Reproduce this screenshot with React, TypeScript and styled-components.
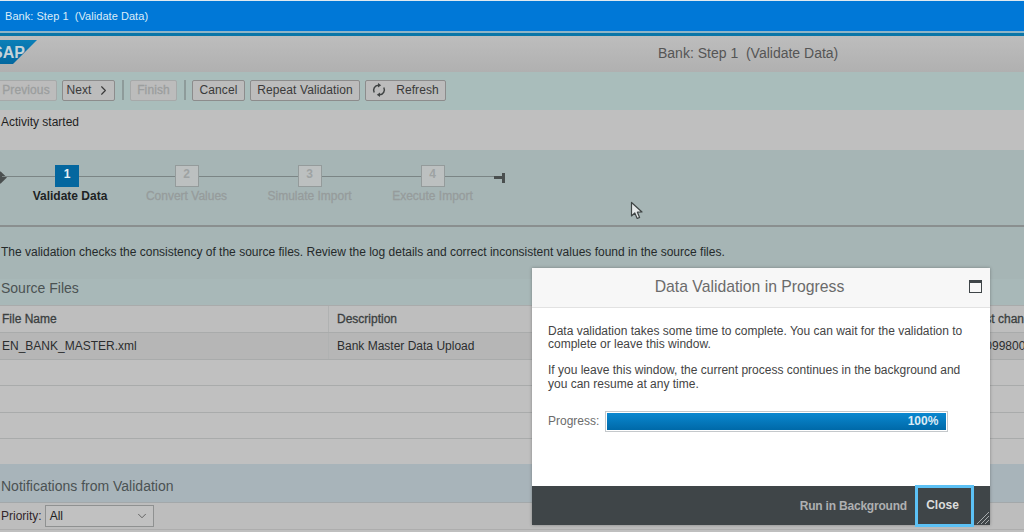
import React from "react";
import styled, { createGlobalStyle } from "styled-components";
import { ChevronDown, ChevronRight } from "lucide-react";

const GlobalStyle = createGlobalStyle`
  html, body {
    margin: 0;
    padding: 0;
    background: #bfbfbf;
  }
  * {
    box-sizing: border-box;
  }
`;

const Page = styled.div`
  position: relative;
  width: 1024px;
  height: 532px;
  overflow: hidden;
  font-family: "Liberation Sans", Arial, sans-serif;
  font-size: 12px;
  color: #2c2c2c;
  display: flex;
  flex-direction: column;
`;

const TitleBar = styled.div`
  height: 33px;
  flex: none;
  background: #0078d7;
  border-top: 1px solid #dfe9f0;
  border-bottom: 2px solid #8fb4c6;
  color: #dcecf8;
  font-size: 11px;
  letter-spacing: 0.05px;
  display: flex;
  align-items: center;
  padding: 0 5px 1px;
  white-space: pre;
`;

const AccentLine = styled.div`
  height: 3px;
  flex: none;
  background: #0a76a8;
`;

const Header = styled.div`
  height: 36px;
  flex: none;
  background: linear-gradient(#bdbdbd, #b0b0b0);
  display: flex;
  align-items: flex-start;
  padding-top: 4px;
`;

const HeaderTitle = styled.div`
  font-size: 14px;
  color: #555;
  white-space: pre;
  margin: 5px 0 0 621px;
`;

const Toolbar = styled.div`
  height: 38px;
  flex: none;
  background: #a9bdbb;
  display: flex;
  align-items: center;
  gap: 5px;
  padding: 0 0 2px 0;
  margin-left: -5px;
`;

const ToolButton = styled.div<{ $disabled?: boolean; $width: number }>`
  width: ${(p) => p.$width}px;
  height: 21px;
  background: #bcbcbc;
  border: 1px solid ${(p) => (p.$disabled ? "#a6a9a9" : "#8c8c8c")};
  border-radius: 2px;
  color: ${(p) => (p.$disabled ? "#9b9e9e" : "#3a3a3a")};
  ${(p) => p.$disabled && "-webkit-text-stroke: 0.3px #9b9e9e;"}
  display: flex;
  align-items: center;
  justify-content: center;
  gap: 4px;
  letter-spacing: 0.1px;
`;

const RefreshLabel = styled.span`
  margin-left: 6px;
`;

const ToolSeparator = styled.div`
  width: 2px;
  height: 20px;
  background: #8e9b9a;
  margin: 0 1px 0 2px;
`;

const ActivityBar = styled.div`
  height: 40px;
  flex: none;
  background: #bfbfbf;
  padding: 5px 1px;
  color: #1f1f1f;
`;

const Roadmap = styled.div`
  height: 77px;
  flex: none;
  position: relative;
  background: #a6b5b5;
  border-bottom: 2px solid #8a8f8f;
  display: flex;
  padding: 15px 0 0 2px;
`;

const RoadStart = styled.div`
  width: 9px;
  height: 9px;
  background: #4a4f4f;
  transform: rotate(45deg);
  position: absolute;
  left: -4px;
  top: 23px;
`;

const RoadEnd = styled.div`
  position: absolute;
  left: 494px;
  top: 23px;
  width: 11px;
  height: 10px;
  border-right: 3px solid #4a4f4f;
  &::before {
    content: "";
    position: absolute;
    left: 0;
    top: 3px;
    width: 8px;
    height: 3px;
    background: #4a4f4f;
  }
`;

const Step = styled.div`
  position: relative;
  width: 123px;
  display: flex;
  flex-direction: column;
  align-items: center;
  &::before {
    content: "";
    position: absolute;
    left: 0;
    right: 0;
    top: 11px;
    height: 1px;
    background: #7b8585;
  }
`;

const StepBox = styled.div<{ $active?: boolean }>`
  position: relative;
  width: 24px;
  height: 22px;
  margin-left: ${(p) => (p.$active ? "7px" : "0")};
  background: ${(p) => (p.$active ? "#04679f" : "#bcc0c0")};
  border: 1px solid ${(p) => (p.$active ? "#04679f" : "#949b9b")};
  color: ${(p) => (p.$active ? "#e8f1f6" : "#9ea3a3")};
  font-weight: bold;
  text-align: center;
  line-height: 17px;
`;

const StepLabel = styled.div<{ $active?: boolean }>`
  margin-top: 2px;
  margin-left: ${(p) => (p.$active ? "13px" : "0")};
  font-weight: ${(p) => (p.$active ? "bold" : "normal")};
  white-space: nowrap;
  color: ${(p) => (p.$active ? "#1d2324" : "#969c9c")};
  ${(p) => !p.$active && "-webkit-text-stroke: 0.3px #969c9c;"}
`;

const Description = styled.div`
  height: 52px;
  flex: none;
  background: #a6b5b5;
  padding-top: 18px;
  padding-left: 1px;
  color: #252a2b;
  white-space: nowrap;
`;

const SectionTitle = styled.div<{ $bg: string; $height: number; $bottom: number }>`
  height: ${(p) => p.$height}px;
  flex: none;
  background: ${(p) => p.$bg};
  font-size: 14px;
  color: #4b5253;
  padding: 0 1px ${(p) => p.$bottom}px;
  display: flex;
  align-items: flex-end;
`;

const TableRow = styled.div<{ $bg: string; $height: number }>`
  height: ${(p) => p.$height}px;
  flex: none;
  background: ${(p) => p.$bg};
  border-top: 1px solid #a9abab;
  display: grid;
  grid-template-columns: 328px 644px 1fr;
  align-items: center;
`;

const Cell = styled.div<{ $bold?: boolean }>`
  height: 100%;
  padding: 0 0 1px 2px;
  display: flex;
  align-items: center;
  white-space: nowrap;
  overflow: hidden;
  color: ${(p) => (p.$bold ? "#3b3f40" : "#2b2d2e")};
  ${(p) => p.$bold && "-webkit-text-stroke: 0.3px #3b3f40;"}
  &:nth-child(2) {
    padding-left: 8px;
    border-left: 1px solid #b0b2b2;
  }
  &:nth-child(3) {
    padding-left: 0;
  }
`;

const FilterRow = styled.div`
  height: 28px;
  flex: none;
  background: #bdbdbd;
  border-top: 1px solid #a3a8aa;
  border-bottom: 1px solid #adadad;
  display: flex;
  align-items: center;
  gap: 3px;
  padding: 0 1px 1px;
  color: #32262a;
`;

const Select = styled.div`
  width: 109px;
  height: 22px;
  border: 1px solid #8f9191;
  background: #c1c1c1;
  display: flex;
  align-items: center;
  justify-content: space-between;
  padding: 0 4px;
  color: #202020;
`;

const Dialog = styled.div`
  position: absolute;
  left: 532px;
  top: 268px;
  width: 458px;
  height: 257px;
  background: #fff;
  box-shadow: 0 0 3px rgba(60, 60, 60, 0.45);
  display: flex;
  flex-direction: column;
`;

const DialogHeader = styled.div`
  position: relative;
  height: 40px;
  flex: none;
  background: #f7f7f7;
  border-bottom: 1px solid #e2e2e2;
  display: flex;
  align-items: center;
  justify-content: center;
  padding: 0 23px 2px 0;
  font-size: 15.75px;
  color: #6b6b6b;
`;

const MaximizeIcon = styled.div`
  position: absolute;
  right: 8px;
  top: 12px;
  width: 13px;
  height: 13px;
  border: 1px solid #3f4548;
  border-top-width: 3px;
`;

const DialogBody = styled.div`
  flex: 1;
  padding: 17px 16px 0;
  color: #444;
  line-height: 13px;
`;

const Paragraph = styled.p`
  margin: 0 0 12px;
  & + & {
    line-height: 14px;
  }
`;

const ProgressRow = styled.div`
  display: flex;
  align-items: center;
  gap: 6px;
  margin-top: 20px;
  color: #6b6b6b;
`;

const ProgressTrack = styled.div`
  width: 343px;
  height: 21px;
  border: 1px solid #c4c8cb;
  padding: 1px;
`;

const ProgressFill = styled.div`
  height: 100%;
  background: linear-gradient(#0a88d0, #0069a8);
  color: #dcecf6;
  font-weight: bold;
  display: flex;
  align-items: center;
  justify-content: flex-end;
  padding-right: 8px;
`;

const DialogFooter = styled.div`
  position: relative;
  height: 39px;
  flex: none;
  background: #3f4548;
  display: flex;
  align-items: center;
  justify-content: flex-end;
  padding-right: 16px;
  gap: 8px;
`;

const FooterLink = styled.div`
  color: #aeb0b1;
  font-weight: bold;
  white-space: nowrap;
  letter-spacing: -0.2px;
`;

const CloseButton = styled.div`
  width: 59px;
  height: 42px;
  border: 3px solid #5cc1f5;
  color: #dcdddd;
  font-weight: bold;
  display: flex;
  align-items: center;
  justify-content: center;
  padding: 0 4px 2px 0;
`;

const Grip = styled.svg`
  position: absolute;
  right: 1px;
  bottom: 1px;
`;

const LogoSvg = styled.svg`
  flex: none;
  display: block;
`;

const CursorSvg = styled.svg`
  position: absolute;
  left: 630px;
  top: 201px;
`;

const steps = [
  { label: "Convert Values", n: 2 },
  { label: "Simulate Import", n: 3 },
  { label: "Execute Import", n: 4 },
];

function App() {
  return (
    <Page>
      <GlobalStyle />
      <TitleBar>Bank: Step 1  (Validate Data)</TitleBar>
      <AccentLine />
      <Header>
        <LogoSvg width="37" height="24" viewBox="0 0 37 24">
          <defs>
            <linearGradient id="logoBlue" x1="0" y1="0" x2="0" y2="1">
              <stop offset="0" stopColor="#0b7fb8" />
              <stop offset="1" stopColor="#04689f" />
            </linearGradient>
          </defs>
          <polygon points="0,0 37,0 13,24 0,24" fill="url(#logoBlue)" />
          <text
            x="-8"
            y="18"
            fontFamily="Liberation Sans"
            fontWeight="bold"
            fontSize="16"
            fill="#c6d3d9"
          >
            SAP
          </text>
        </LogoSvg>
        <HeaderTitle>Bank: Step 1  (Validate Data)</HeaderTitle>
      </Header>
      <Toolbar>
        <ToolButton $disabled $width={62}>Previous</ToolButton>
        <ToolButton $width={53}>
          Next <ChevronRight size={15} strokeWidth={1.8} />
        </ToolButton>
        <ToolSeparator />
        <ToolButton $disabled $width={47}>Finish</ToolButton>
        <ToolSeparator />
        <ToolButton $width={53}>Cancel</ToolButton>
        <ToolButton $width={110}>Repeat Validation</ToolButton>
        <ToolButton $width={81}>
          <svg width="14" height="14" viewBox="0 0 14 14" fill="none">
            <path d="M2.2 9.5 A5 5 0 0 1 6.5 2.2" stroke="#3f4343" strokeWidth="1.5" />
            <path d="M6 0 L9.2 2.3 L6 4.6 Z" fill="#3f4343" />
            <path d="M11.8 4.5 A5 5 0 0 1 7.5 11.8" stroke="#3f4343" strokeWidth="1.5" />
            <path d="M8 9.4 L4.8 11.7 L8 14 Z" fill="#3f4343" />
          </svg>
          <RefreshLabel>Refresh</RefreshLabel>
        </ToolButton>
      </Toolbar>
      <ActivityBar>Activity started</ActivityBar>
      <Roadmap>
        <RoadStart />
        <Step>
          <StepBox $active>1</StepBox>
          <StepLabel $active>Validate Data</StepLabel>
        </Step>
        {steps.map((s) => (
          <Step key={s.n}>
            <StepBox>{s.n}</StepBox>
            <StepLabel>{s.label}</StepLabel>
          </Step>
        ))}
        <RoadEnd />
      </Roadmap>
      <Description>
        The validation checks the consistency of the source files. Review the log details and
        correct inconsistent values found in the source files.
      </Description>
      <SectionTitle $bg="#a8b8b8" $height={26} $bottom={9}>Source Files</SectionTitle>
      <TableRow $bg="#bebebe" $height={27}>
        <Cell $bold>File Name</Cell>
        <Cell $bold>Description</Cell>
        <Cell $bold>Last changed by</Cell>
      </TableRow>
      <TableRow $bg="#b6b6b6" $height={27}>
        <Cell>EN_BANK_MASTER.xml</Cell>
        <Cell>Bank Master Data Upload</Cell>
        <Cell>000998000000</Cell>
      </TableRow>
      <TableRow $bg="#c0c0c0" $height={26} />
      <TableRow $bg="#c0c0c0" $height={27} />
      <TableRow $bg="#c0c0c0" $height={26} />
      <TableRow $bg="#c0c0c0" $height={26} />
      <SectionTitle $bg="#a8b4ba" $height={38} $bottom={8}>Notifications from Validation</SectionTitle>
      <FilterRow>
        Priority:
        <Select>
          All
          <ChevronDown size={14} strokeWidth={1} />
        </Select>
      </FilterRow>
      <CursorSvg width="14" height="20" viewBox="0 0 14 20">
        <path
          d="M1.5 1.5 L1.5 15 L4.8 12 L7.2 17.5 L9.6 16.4 L7.4 11.2 L12 11 Z"
          fill="#e4e8e8"
          stroke="#3f4545"
          strokeWidth="1.2"
          strokeLinejoin="round"
        />
      </CursorSvg>
      <Dialog>
        <DialogHeader>
          Data Validation in Progress
          <MaximizeIcon />
        </DialogHeader>
        <DialogBody>
          <Paragraph>
            Data validation takes some time to complete. You can wait for the validation to
            complete or leave this window.
          </Paragraph>
          <Paragraph>
            If you leave this window, the current process continues in the background and you can
            resume at any time.
          </Paragraph>
          <ProgressRow>
            Progress:
            <ProgressTrack>
              <ProgressFill>100%</ProgressFill>
            </ProgressTrack>
          </ProgressRow>
        </DialogBody>
        <DialogFooter>
          <FooterLink>Run in Background</FooterLink>
          <CloseButton>Close</CloseButton>
          <Grip width="12" height="12" viewBox="0 0 12 12">
            <path d="M0 12 L12 0 M4 12 L12 4 M8 12 L12 8" stroke="#a7abad" strokeWidth="1" />
          </Grip>
        </DialogFooter>
      </Dialog>
    </Page>
  );
}

export default App;
